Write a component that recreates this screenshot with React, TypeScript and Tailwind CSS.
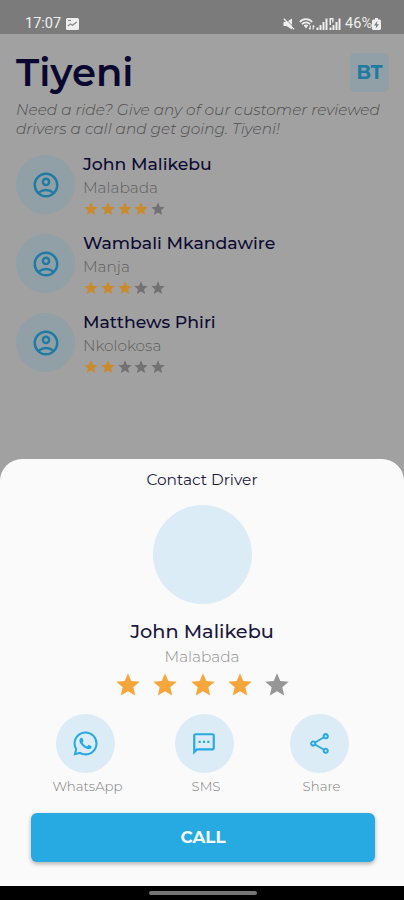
import React from 'react';
import {
  MdOutlineAccountCircle,
  MdOutlineShare,
  MdOutlineSms,
  MdStar,
  MdWhatsapp,
} from 'react-icons/md';

interface Driver {
  name: string;
  location: string;
  rating: number;
}

const drivers: Driver[] = [
  { name: 'John Malikebu', location: 'Malabada', rating: 4 },
  { name: 'Wambali Mkandawire', location: 'Manja', rating: 3 },
  { name: 'Matthews Phiri', location: 'Nkolokosa', rating: 2 },
];

const actions = [
  { label: 'WhatsApp', icon: MdWhatsapp, iconClass: 'w-[29px] h-[29px]' },
  { label: 'SMS', icon: MdOutlineSms, iconClass: 'w-[26px] h-[26px]' },
  { label: 'Share', icon: MdOutlineShare, iconClass: 'w-[25px] h-[25px]' },
];

interface StarsProps {
  rating: number;
  className: string;
  starClass: string;
  onClass: string;
  offClass: string;
}

const Stars: React.FC<StarsProps> = ({ rating, className, starClass, onClass, offClass }) => (
  <div className={`flex items-center ${className}`}>
    {[1, 2, 3, 4, 5].map((n) => (
      <MdStar key={n} className={`${starClass} shrink-0 ${n <= rating ? onClass : offClass}`} />
    ))}
  </div>
);

const PictureIcon = () => (
  <svg viewBox="0 0 13 12" className="w-[13px] h-[12px]">
    <rect width="13" height="12" rx="1.5" fill="currentColor" />
    <path d="M1.8 8 4.5 6l2 1.2L10.8 4" stroke="#8b8b8b" strokeWidth="1.3" fill="none" />
    <path d="M2 2.5h3" stroke="#8b8b8b" strokeWidth="1.2" />
  </svg>
);

const MutedIcon = () => (
  <svg viewBox="0 0 12 12" className="w-[12px] h-[12px]">
    <path d="M0.5 4h3L9 0.5v11L3.5 8h-3z" fill="currentColor" />
    <path d="M1.5 0 12 10.5" stroke="#7b7b7b" strokeWidth="1" />
    <path d="M0.8 0.8 11.2 11.4" stroke="currentColor" strokeWidth="1.3" />
  </svg>
);

const WifiIcon = () => (
  <svg viewBox="0 0 16 12" className="w-[16px] h-[12px]" fill="none" stroke="currentColor">
    <path d="M0.8 4C4 0.2 10 0.2 13.2 4" strokeWidth="1.7" />
    <path d="M2.9 6.2C5 3.8 9 3.8 11.1 6.2" strokeWidth="1.7" />
    <path d="M4.6 7.3Q7 5.6 9.4 7.3L7 10.4z" fill="currentColor" stroke="none" />
    <path d="M11.2 7.4v4M10 10l1.2 1.4M14.2 11.4v-4M15.4 8.8l-1.2-1.4" strokeWidth="1.1" />
  </svg>
);

const SignalIcon: React.FC<{ roaming?: boolean }> = ({ roaming }) => (
  <svg viewBox="0 0 12 12" className="w-[12px] h-[12px]" fill="currentColor">
    <path d="M0.5 9.5h2V12h-2zM3.5 7h2v5h-2zM6.5 4h2v8h-2zM9.5 0.5h2V12h-2z" />
    {roaming && <path d="M0.5 0h1.5v7H0.5zM2 0h2.500v1.500H2zM3.200 1.500h1.300v3H3.200z" />}
  </svg>
);

const BatteryIcon = () => (
  <svg viewBox="0 0 9 12" className="w-[9px] h-[12px]">
    <path d="M3 0h3v1.5h1.5Q9 1.5 9 3v7.5Q9 12 7.5 12h-6Q0 12 0 10.5V3Q0 1.5 1.5 1.5H3z" fill="currentColor" />
    <path d="M5.4 2.8 2 7.4h2.2L3.6 10.8 7 6.2H4.8z" fill="#7b7b7b" />
  </svg>
);

const StatusBar = () => (
  <div className="h-[34px] shrink-0 pt-[14px] pl-[25px] pr-[23px] bg-[#7b7b7b] flex items-center justify-between text-[#efefef]">
    <div className="flex items-center gap-[5px]">
      <span className="font-['Roboto'] text-[14.5px] leading-none">17:07</span>
      <PictureIcon />
    </div>
    <div className="flex items-center">
      <MutedIcon />
      <span className="w-[4px]" />
      <WifiIcon />
      <span className="w-[1px]" />
      <SignalIcon />
      <span className="w-[1px]" />
      <SignalIcon roaming />
      <span className="font-['Roboto'] text-[14.5px] leading-none ml-[4px]">46%</span>
      <BatteryIcon />
    </div>
  </div>
);

const DriverRow: React.FC<{ driver: Driver }> = ({ driver }) => (
  <div className="flex h-[59px] gap-[8px]">
    <div className="w-[59px] h-[59px] rounded-full bg-[#919fa7] flex items-center justify-center shrink-0">
      <MdOutlineAccountCircle className="w-[30px] h-[30px] text-[#1e7ba4]" />
    </div>
    <div>
      <p className="-mt-[1px] text-[17.3px] leading-[20px] font-medium text-[#0d0b33] whitespace-nowrap">{driver.name}</p>
      <p className="mt-[4px] text-[15.3px] leading-[20px] font-light text-[#5e5e5e]">{driver.location}</p>
      <Stars
        rating={driver.rating}
        className="mt-[3px] gap-[0.8px]"
        starClass="w-[16px] h-[16px]"
        onClass="text-[#c98a2c]"
        offClass="text-[#727272]"
      />
    </div>
  </div>
);

export default function App() {
  return (
    <div className="w-[404px] h-[900px] flex flex-col overflow-hidden bg-[#a1a1a1] font-['Montserrat','Inter',sans-serif]">
      <StatusBar />

      {/* Driver list, dimmed behind the sheet */}
      <main className="h-[425px] px-4 pt-[19px] shrink-0">
        <div className="flex items-start justify-between">
          <h1 className="text-[38.5px] leading-[40px] font-semibold text-[#0a0830]">Tiyeni</h1>
          <div className="w-[39px] h-[39px] -mr-[1px] rounded-[5px] bg-[#919fa7] text-[#1e7ba4] flex items-center justify-center pt-[2px] text-[19px] font-bold">
            BT
          </div>
        </div>
        <p className="mt-[8px] text-[15.35px] leading-[18.5px] font-light italic text-[#505050] whitespace-nowrap">
          Need a ride? Give any of our customer reviewed
          <br />
          drivers a call and get going. Tiyeni!
        </p>
        <div className="mt-[17px] flex flex-col gap-[20px]">
          {drivers.map((driver) => (
            <DriverRow key={driver.name} driver={driver} />
          ))}
        </div>
      </main>

      {/* Contact sheet */}
      <section className="h-[427px] shrink-0 rounded-t-[22px] bg-[#fafafa] flex flex-col items-center">
        <p className="mt-[11px] text-[15.4px] leading-[20px] text-[#1a1740]">Contact Driver</p>
        <div className="mt-[15px] w-[99px] h-[99px] rounded-full bg-[#dbecf6]" />
        <h2 className="mt-[15px] text-[19.3px] leading-[24px] font-medium text-[#1a1740]">John Malikebu</h2>
        <p className="mt-[4px] text-[15.3px] leading-[20px] font-light text-[#8f8f8f]">Malabada</p>
        <Stars
          rating={4}
          className="mt-[4px] gap-[9.3px] ml-[1px]"
          starClass="w-[28px] h-[28px]"
          onClass="text-[#f6a63a]"
          offClass="text-[#969696]"
        />
        <div className="mt-[15px] w-full pl-[46px] grid grid-cols-[118.5px_118.5px_112px]">
          {actions.map(({ label, icon: Icon, iconClass }) => (
            <div key={label} className="w-[79px] last:-ml-[3px] flex flex-col items-center">
              <div className="w-[59px] h-[59px] rounded-full bg-[#dbecf6] flex items-center justify-center">
                <Icon className={`${iconClass} text-[#27a9e1]`} />
              </div>
              <span className="mt-[4px] pl-[4px] text-[13.3px] leading-[18px] font-light text-[#808080]">{label}</span>
            </div>
          ))}
        </div>
        <button className="mt-[18px] ml-[2px] w-[344px] h-[49px] rounded-[6px] bg-[#27a9e1] text-[#f4fbff] text-[16.8px] font-bold shadow-[0_2px_4px_rgba(0,0,0,0.3)]">
          <span className="block pt-[1px]">CALL</span>
        </button>
      </section>

      <div className="h-[14px] shrink-0 bg-black flex justify-center pt-[5px]">
        <div className="w-[108px] h-[4px] ml-[2px] rounded-full bg-[#757575]" />
      </div>
    </div>
  );
}
